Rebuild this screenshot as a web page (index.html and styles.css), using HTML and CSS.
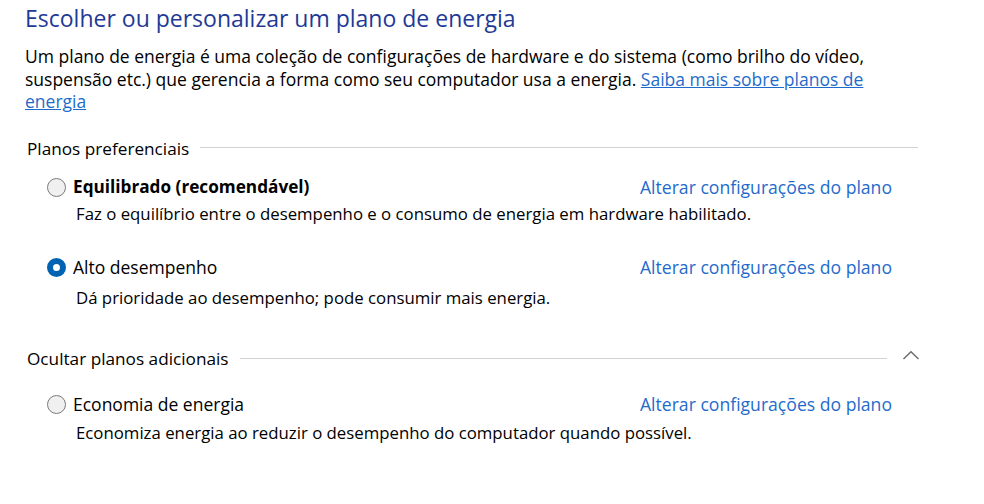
FILE: index.html
```html
<!DOCTYPE html>
<html lang="pt-BR">
<head>
<meta charset="utf-8">
<title>Opções de Energia</title>
<link rel="stylesheet" href="styles.css">
</head>
<body>
<main class="page">
  <h1 class="title">Escolher ou personalizar um plano de energia</h1>
  <p class="intro">Um plano de energia é uma coleção de configurações de hardware e do sistema (como brilho do vídeo, suspensão etc.) que gerencia a forma como seu computador usa a energia. <a href="#" class="inline-link">Saiba mais sobre planos de energia</a></p>

  <section class="group group-first">
    <div class="group-head">
      <span class="group-title">Planos preferenciais</span>
      <span class="rule"></span>
    </div>
    <div class="plan plan-1">
      <div class="plan-row">
        <label class="plan-label"><span class="radio"></span><span class="plan-name bold">Equilibrado (recomendável)</span></label>
        <a href="#" class="plan-link">Alterar configurações do plano</a>
      </div>
      <p class="plan-desc desc-1">Faz o equilíbrio entre o desempenho e o consumo de energia em hardware habilitado.</p>
    </div>
    <div class="plan plan-2">
      <div class="plan-row">
        <label class="plan-label"><span class="radio checked"></span><span class="plan-name">Alto desempenho</span></label>
        <a href="#" class="plan-link">Alterar configurações do plano</a>
      </div>
      <p class="plan-desc">Dá prioridade ao desempenho; pode consumir mais energia.</p>
    </div>
  </section>

  <section class="group group-second">
    <div class="group-head">
      <span class="group-title">Ocultar planos adicionais</span>
      <span class="rule rule-short"></span>
      <svg class="chevron" width="18" height="10" viewBox="0 0 18 10"><path d="M1.5 9 L9 1.8 L16.5 9" fill="none" stroke="#6b6b6b" stroke-width="1.4"/></svg>
    </div>
    <div class="plan plan-3">
      <div class="plan-row">
        <label class="plan-label"><span class="radio"></span><span class="plan-name">Economia de energia</span></label>
        <a href="#" class="plan-link">Alterar configurações do plano</a>
      </div>
      <p class="plan-desc desc-3">Economiza energia ao reduzir o desempenho do computador quando possível.</p>
    </div>
  </section>
</main>
</body>
</html>
```
FILE: styles.css
```css
html, body {
  margin: 0;
  padding: 0;
  background: #ffffff;
}

body {
  font-family: "Open Sans", "Noto Sans", "Liberation Sans", sans-serif;
  color: #000000;
  width: 984px;
  height: 504px;
  overflow: hidden;
}

.page {
  width: 893px;
  padding: 3px 0 0 25px;
}

.title {
  margin: 0;
  font-size: 23px;
  font-weight: 400;
  line-height: 30px;
  color: #1e3a96;
}

.intro {
  margin: 12px 0 0;
  font-size: 17.5px;
  line-height: 22.5px;
  width: 850px;
}

.inline-link {
  color: #1f6bcc;
  text-decoration: underline;
}

.group {
  margin: 0;
}

.group-first {
  margin-top: 24px;
}

.group-second {
  margin-top: 37px;
}

.group-head {
  display: flex;
  align-items: center;
  height: 24px;
  padding-left: 2px;
}

.group-title {
  font-size: 17.2px;
  line-height: 24px;
  white-space: nowrap;
}

.rule {
  flex: 1;
  height: 1px;
  background: #d2d2d2;
  margin-left: 11px;
  margin-top: -2px;
}

.group-second .rule {
  margin-top: 0;
}

.rule-short {
  margin-right: 15px;
}

.chevron {
  display: block;
  margin-top: -8px;
  margin-right: -2px;
  flex: none;
}

.plan {
  padding-left: 22px;
}

.plan-1 {
  margin-top: 13px;
}

.plan-2 {
  margin-top: 28px;
}

.plan-3 {
  margin-top: 20px;
}

.plan-row {
  display: flex;
  align-items: center;
  justify-content: space-between;
  height: 26px;
}

.plan-label {
  display: flex;
  align-items: center;
  gap: 7px;
}

.radio {
  box-sizing: border-box;
  width: 19px;
  height: 19px;
  margin-top: 2px;
  border-radius: 50%;
  border: 1px solid #7a7a7a;
  background: #f0f0f0;
  flex: none;
}

.radio.checked {
  border: 6px solid #0063b1;
  background: #ffffff;
}

.plan-name {
  font-size: 17.5px;
  line-height: 24px;
}

.bold {
  font-size: 17.2px;
  font-weight: 700;
}

.plan-link {
  font-size: 17.6px;
  line-height: 24px;
  color: #1f6bcc;
  text-decoration: none;
  margin-right: 26px;
}

.plan-desc {
  margin: 6px 0 0 29px;
  font-size: 16.8px;
  line-height: 24px;
}

.desc-1 {
  margin-top: 2px;
}

.desc-3 {
  margin-top: 4px;
}
```
